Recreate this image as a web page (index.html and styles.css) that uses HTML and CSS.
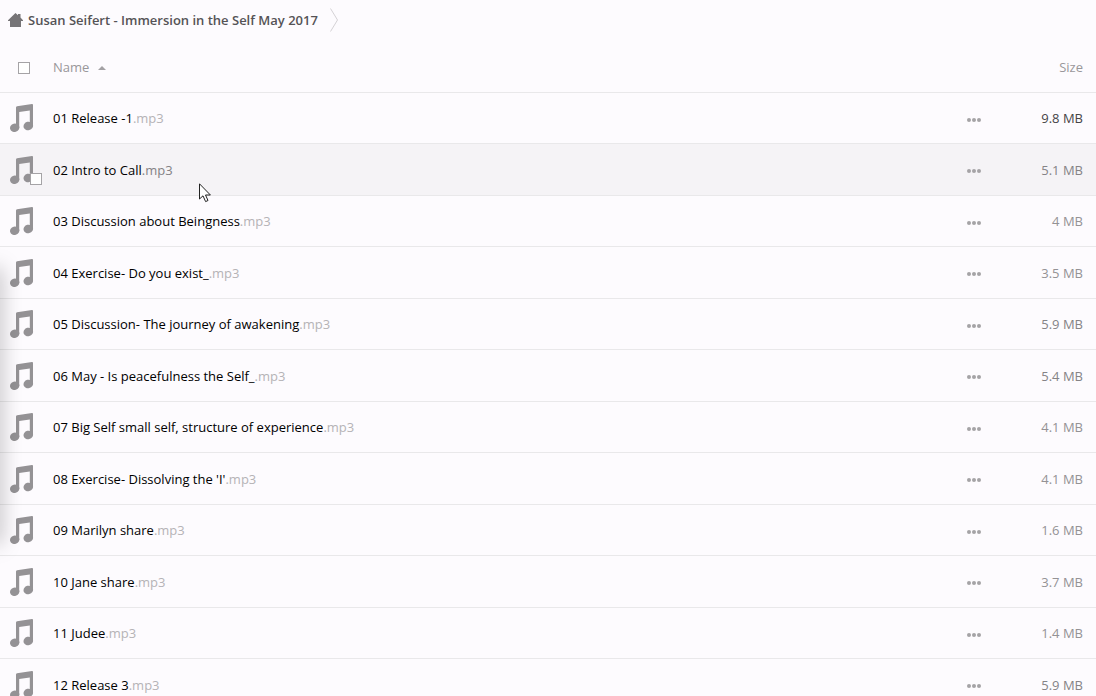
FILE: index.html
```
<!DOCTYPE html>
<html lang="en">
<head>
  <meta charset="UTF-8" />
  <meta name="viewport" content="width=device-width, initial-scale=1.0" />
  <title>Susan Seifert - Immersion in the Self May 2017</title>
  <link rel="stylesheet" href="styles.css">
</head>
<body>

<!-- Shared icons -->
<svg class="sprite" aria-hidden="true">
  <symbol id="note" viewBox="0 0 24 28">
    <path d="M6 3.4 Q6 2.4 7 2.2 L22 0.1 Q23 0 23 1 V22 H19.8 V6.4 L9.2 8 V24 H6 Z" />
    <ellipse cx="4.7" cy="23.8" rx="4.7" ry="4.2" transform="rotate(-15 4.7 23.8)" />
    <ellipse cx="18.3" cy="21.9" rx="4.8" ry="4.2" transform="rotate(-15 18.3 21.9)" />
  </symbol>
  <symbol id="dots" viewBox="0 0 14 4">
    <circle cx="2" cy="2" r="2" />
    <circle cx="7" cy="2" r="2" />
    <circle cx="12" cy="2" r="2" />
  </symbol>
</svg>

<div class="files">
  <!-- Breadcrumb -->
  <nav class="breadcrumb">
    <a href="#">
      <svg class="home" viewBox="0 0 15 14"><path d="M7.5 0 L10 2.3 V1 H12.5 V4.6 L15 7.2 V8 H13 V14 H2 V8 H0 V7.2 Z" /></svg>
      <span>Susan Seifert - Immersion in the Self May 2017</span>
    </a>
    <svg class="chevron" viewBox="0 0 8 24"><path d="M0.5 0.5 L7.5 12 L0.5 23.5" /></svg>
  </nav>

  <!-- File list -->
  <table>
    <thead>
      <tr>
        <th class="icon"><input type="checkbox" aria-label="Select all"></th>
        <th class="name"><button class="sort">Name<span class="arrow"></span></button></th>
        <th class="actions"></th>
        <th class="size"><button class="sort">Size</button></th>
      </tr>
    </thead>
    <tbody id="fileList"></tbody>
  </table>
</div>

<div class="edge-shadow"></div>
<svg class="cursor" viewBox="0 0 12 20"><path d="M0.5 0.8 V16 L4 12.8 L6.6 18.6 L9 17.5 L6.5 12 H11.4 Z" /></svg>

<script src="files.js"></script>
</body>
</html>
```
FILE: styles.css
```
body {
  margin: 0;
  font-family: "Open Sans", "Liberation Sans", sans-serif;
  font-size: 13px;
  line-height: 20px;
  color: #000;
  background-color: #fdfbfe;
}

.sprite {
  display: none;
}

.files {
  height: 100vh;
  overflow: hidden;
}

/* Breadcrumb */
.breadcrumb {
  display: flex;
  align-items: center;
  gap: 12px;
  height: 39px;
  padding: 0 0 2px 8px;
}

.breadcrumb a {
  display: flex;
  align-items: center;
  gap: 5px;
  color: #555356;
  font-weight: 600;
  text-decoration: none;
}

.home {
  width: 15px;
  height: 14px;
  fill: #767477;
}

.chevron {
  width: 8px;
  height: 24px;
  fill: none;
  stroke: #d4d2d5;
}

/* File list */
table {
  width: 100%;
  table-layout: fixed;
  border-collapse: separate;
  border-spacing: 0;
}

th, td {
  height: 50px;
  padding: 0;
  border-bottom: 1px solid #e9e8ea;
  text-align: left;
  vertical-align: middle;
}

th,
tbody tr:nth-child(even) td {
  height: 51px;
}

.icon {
  width: 53px;
}

.actions {
  width: 33px;
}

.size {
  width: 83px;
  padding-right: 13px;
  text-align: right;
}

button {
  padding: 0;
  border: 0;
  background: none;
  font: inherit;
  cursor: pointer;
}

.sort {
  color: #99979a;
  font-weight: 400;
}

.arrow {
  display: inline-block;
  margin-left: 9px;
  border: 4px solid transparent;
  border-top: 0;
  border-bottom-color: #a3a1a4;
  vertical-align: middle;
}

input[type="checkbox"] {
  appearance: none;
  display: block;
  box-sizing: border-box;
  width: 12px;
  height: 12px;
  margin: 2px 0 0 18px;
  border: 1px solid #a5a3a6;
  background-color: #fff;
}

.thumb {
  position: relative;
  width: 24px;
  height: 28px;
  margin-left: 10px;
}

.note {
  display: block;
  width: 24px;
  height: 28px;
  fill: #949295;
}

.thumb input[type="checkbox"] {
  position: absolute;
  right: -8px;
  bottom: -1px;
  margin: 0;
}

.ext {
  color: #b5b3b6;
}

.more {
  display: block;
  padding: 3px 0 0;
}

.dots {
  display: block;
  width: 14px;
  height: 4px;
  fill: #a5a3a6;
}

td.size {
  color: #949295;
}

td.size.large {
  color: #464447;
}

td.size.medium {
  color: #858386;
}

.hover td {
  background-color: #f5f3f6;
}

.hover .ext {
  color: #848285;
}

/* Shadow cast from the left edge of the window */
.edge-shadow {
  position: absolute;
  top: 268px;
  left: -10px;
  width: 10px;
  height: 276px;
  box-shadow: 0 0 20px rgba(0, 0, 0, 0.35);
}

.cursor {
  position: absolute;
  top: 183px;
  left: 199px;
  width: 12px;
  height: 20px;
  fill: #fff;
  stroke: #222;
}
```
FILE: files.js
```
const files = [
  { name: "01 Release -1", size: "9.8 MB", tone: "large" },
  { name: "02 Intro to Call", size: "5.1 MB", tone: "medium", hover: true },
  { name: "03 Discussion about Beingness", size: "4 MB" },
  { name: "04 Exercise- Do you exist_", size: "3.5 MB" },
  { name: "05 Discussion- The journey of awakening", size: "5.9 MB", tone: "medium" },
  { name: "06 May - Is peacefulness the Self_", size: "5.4 MB", tone: "medium" },
  { name: "07 Big Self small self, structure of experience", size: "4.1 MB" },
  { name: "08 Exercise- Dissolving the 'I'", size: "4.1 MB" },
  { name: "09 Marilyn share", size: "1.6 MB" },
  { name: "10 Jane share", size: "3.7 MB" },
  { name: "11 Judee", size: "1.4 MB" },
  { name: "12 Release 3", size: "5.9 MB", tone: "medium" }
];

const list = document.getElementById("fileList");

files.forEach(file => {
  const row = document.createElement("tr");
  if (file.hover) {
    row.className = "hover";
  }
  const checkbox = file.hover ? `<input type="checkbox" aria-label="Select ${file.name}">` : "";
  row.innerHTML = `
    <td class="icon"><div class="thumb"><svg class="note"><use href="#note" /></svg>${checkbox}</div></td>
    <td class="name">${file.name}<span class="ext">.mp3</span></td>
    <td class="actions"><button class="more" aria-label="More actions"><svg class="dots"><use href="#dots" /></svg></button></td>
    <td class="size ${file.tone || ""}">${file.size}</td>`;
  list.appendChild(row);
});
```
